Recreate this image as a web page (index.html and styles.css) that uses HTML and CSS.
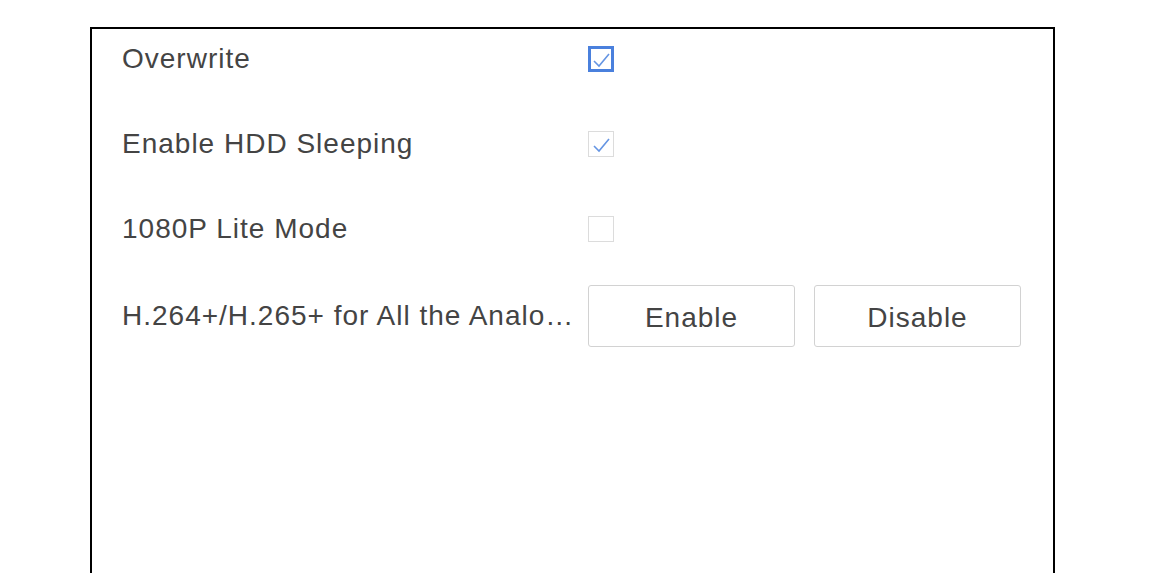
FILE: index.html
```html
<!DOCTYPE html>
<html>
<head>
  <title>Storage Settings</title>
  <link rel="stylesheet" href="styles.css">
</head>
<body>
  <div class="panel">
    <div class="setting-row">
      <label class="setting-label">Overwrite</label>
      <span class="checkbox checked focused">
        <svg viewBox="0 0 26 26" class="check-icon"><path d="M6 15 L11 20 L21 8"/></svg>
      </span>
    </div>
    <div class="setting-row">
      <label class="setting-label">Enable HDD Sleeping</label>
      <span class="checkbox checked">
        <svg viewBox="0 0 26 26" class="check-icon"><path d="M6 15 L11 20 L21 8"/></svg>
      </span>
    </div>
    <div class="setting-row">
      <label class="setting-label">1080P Lite Mode</label>
      <span class="checkbox"></span>
    </div>
    <div class="setting-row button-row">
      <label class="setting-label">H.264+/H.265+ for All the Analog Cameras</label>
      <div class="setting-buttons">
        <button class="setting-button">Enable</button>
        <button class="setting-button">Disable</button>
      </div>
    </div>
  </div>
</body>
</html>
```

FILE: styles.css
```css
:root {
  --text-color: #444;
  --border-color: #d2d2d2;
  --checkbox-border: #dcdcdc;
  --focus-color: #4a80dd;
  --check-color: #6595e3;
  --row-gap: 25px;
}

html, body {
  margin: 0;
  padding: 0;
  background-color: #fff;
  overflow: hidden;
}

body {
  font-family: "Liberation Sans", Arial, sans-serif;
  color: var(--text-color);
}

.panel {
  margin: 27px 0 0 90px;
  width: 965px;
  height: 620px;
  border: 2px solid #000;
  padding: 0 0 0 30px;
  box-sizing: border-box;
  display: flex;
  flex-direction: column;
  gap: var(--row-gap);
}

.setting-row {
  display: flex;
  align-items: center;
  min-height: 60px;
}

.button-row {
  min-height: 62px;
  margin-top: 1px;
}

.setting-label {
  width: 452px;
  margin-right: 14px;
  font-size: 28px;
  letter-spacing: 1px;
  white-space: nowrap;
  overflow: hidden;
  text-overflow: ellipsis;
}

.checkbox {
  width: 26px;
  height: 26px;
  box-sizing: border-box;
  border: 1px solid var(--checkbox-border);
  display: flex;
  align-items: center;
  justify-content: center;
}

.checkbox.focused {
  border: 3px solid var(--focus-color);
}

.check-icon {
  width: 26px;
  height: 26px;
  flex: none;
  fill: none;
  stroke: var(--check-color);
  stroke-width: 1.6;
}

.setting-buttons {
  display: flex;
  gap: 19px;
}

.setting-button {
  width: 207px;
  height: 62px;
  background-color: #fff;
  border: 1px solid var(--border-color);
  border-radius: 3px;
  font-family: "Liberation Sans", Arial, sans-serif;
  font-size: 28px;
  letter-spacing: 1px;
  color: var(--text-color);
  padding: 4px 0 0;
  cursor: pointer;
}
```
